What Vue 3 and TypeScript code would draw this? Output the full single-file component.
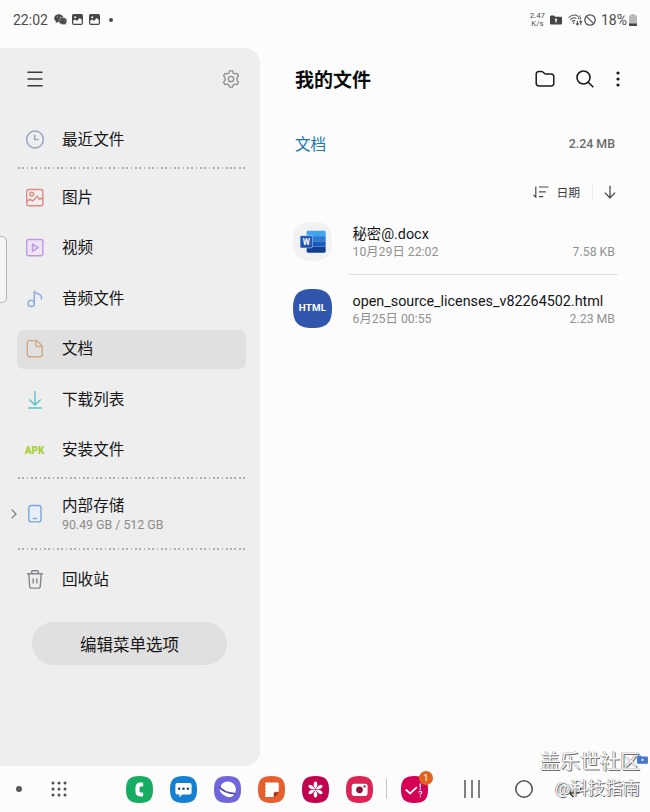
<template>
  <div class="screen">
    <header class="status">
      <div class="status-left">
        <span class="clock">22:02</span>
        <svg class="ic-wechat" viewBox="0 0 13 11" width="13" height="11">
          <ellipse cx="4.8" cy="4.2" rx="4.6" ry="3.9" fill="#484848" />
          <path d="M1.6 9l.6-2.4 2 1.3z" fill="#484848" />
          <ellipse cx="8.9" cy="7" rx="4" ry="3.4" fill="#484848" stroke="#fcfcfc" stroke-width=".4" />
          <path d="M11.6 10.8l-1.6-1.2 1.6-1z" fill="#484848" />
          <circle cx="3.3" cy="3" r=".5" fill="#fcfcfc" />
          <circle cx="6.2" cy="3" r=".5" fill="#fcfcfc" />
          <circle cx="7.7" cy="6.3" r=".4" fill="#fcfcfc" />
          <circle cx="10.2" cy="6.3" r=".4" fill="#fcfcfc" />
        </svg>
        <svg v-for="n in 2" :key="n" class="ic-shot" viewBox="0 0 11 11" width="11" height="11">
          <rect x=".6" y=".6" width="9.8" height="9.8" rx="1.3" fill="none" stroke="#484848" stroke-width="1.2" />
          <path d="M.6.6h9.8v5.6L7.6 4 5 7 3.2 5.5.6 7z" fill="#484848" />
          <circle cx="3.2" cy="3.2" r="1" fill="#fcfcfc" />
        </svg>
        <span class="more-dot"></span>
      </div>
      <div class="status-right">
        <span class="speed"><span>2.47</span><span>K/s</span></span>
        <svg class="ic-secure" viewBox="0 0 12 10" width="12" height="10">
          <path d="M0 1.5Q0 .5 1 .5h3l1.2 1.3H11q1 0 1 1v5.7q0 1-1 1H1q-1 0-1-1z" fill="#454545" />
          <path d="M6 3.4a1.2 1.2 0 0 1 .6 2.2v1.8H5.4V5.6A1.2 1.2 0 0 1 6 3.4z" fill="#fcfcfc" />
        </svg>
        <svg class="ic-wifi" viewBox="0 0 15 12" width="15" height="12" fill="none" stroke="#505050" stroke-width="1.1">
          <path d="M.6 3.6Q5.6-.8 10 2.4M2.2 5.6Q5.6 2.6 8.4 4.6M3.8 7.5Q5.7 6 7.2 7" />
          <path d="M5.6 8.4v1.5" stroke-width="1.4" />
          <path d="M12.4 1.6q-2 .6-2 2.4a1.2 1.2 0 1 0 1.2-1.2" stroke-width=".9" />
          <path d="M9.4 7v4M8.2 9.6l1.2 1.4 1.2-1.4M12.8 11V7M11.6 8.2l1.2-1.3L14 8.2" />
        </svg>
        <svg class="ic-block" viewBox="0 0 12 12" width="12" height="12" fill="none" stroke="#505050" stroke-width="1.3">
          <circle cx="6" cy="6" r="5.2" />
          <path d="M2.4 2.4l7.2 7.2" />
        </svg>
        <span class="percent">18%</span>
        <svg class="ic-battery" viewBox="0 0 8 12" width="8" height="12">
          <path d="M2.4 0h3.2v1.2H7q1 0 1 1V11q0 1-1 1H1q-1 0-1-1V2.2q0-1 1-1h1.4z" fill="#b9b9b9" />
          <path d="M0 9.6h8V11q0 1-1 1H1q-1 0-1-1z" fill="#454545" />
        </svg>
      </div>
    </header>

    <div class="body">
      <aside class="sidebar">
        <div class="edge-handle"></div>
        <div class="side-head">
          <svg viewBox="0 0 16 16" width="16" height="16" stroke="#3b3b3b" stroke-width="1.5" stroke-linecap="round">
            <path d="M1 1.3h14M1 8h14M1 14.7h14" />
          </svg>
          <svg viewBox="0 0 18 18" width="18" height="18" fill="none" stroke="#8d8d8d" stroke-width="1.3" stroke-linejoin="round">
            <path d="M7.5.9h3l.6 2.1 1.6.9 2.2-.6 1.6 2.6-1.5 1.7v2.8l1.5 1.7-1.6 2.6-2.2-.6-1.6.9-.6 2.1h-3L6.9 15l-1.6-.9-2.2.6-1.6-2.6L3 10.400V7.600L1.500 5.900l1.600-2.600 2.200.6L6.900 3z" />
            <circle cx="9" cy="9" r="2.7" />
          </svg>
        </div>

        <div class="group group--recent">
          <div class="item">
            <svg class="item-icon" viewBox="0 0 20 20" fill="none" stroke="#9aa6bf" stroke-width="1.5">
              <circle cx="10" cy="9.5" r="8.4" />
              <path d="M9.7 4.7v4.9h3.8" />
            </svg>
            <span class="item-label">最近文件</span>
          </div>
        </div>
        <div class="dots"></div>

        <nav class="group group--types">
          <div v-for="t in types" :key="t.id" class="item" :class="{ 'item--active': t.id === 'doc' }">
            <svg v-if="t.id === 'image'" class="item-icon" viewBox="0 0 20 20" fill="none" stroke="#e08c84" stroke-width="1.4" stroke-linejoin="round">
              <rect x="1.7" y="1.5" width="16.2" height="16.2" rx="2.2" />
              <circle cx="6.7" cy="6.1" r="1.9" />
              <path d="M1.8 13.8l3.2-2.7 2.6 2 4.7-4.8 2.2 3 1.5-1.2 1.9 1.9" />
            </svg>
            <svg v-else-if="t.id === 'video'" class="item-icon" viewBox="0 0 20 20" fill="#eee4f8" stroke="#bd98e0" stroke-width="1.4" stroke-linejoin="round">
              <rect x="1.7" y="1.5" width="16.2" height="16.2" rx="1.8" />
              <path d="M7.5 6v7.2l5.6-3.6z" />
            </svg>
            <svg v-else-if="t.id === 'audio'" class="item-icon" viewBox="0 0 20 20" fill="none" stroke="#8caede" stroke-width="1.5" stroke-linecap="round">
              <circle cx="6.2" cy="14.4" r="3.1" />
              <path d="M9.3 14.4V1.900c.5 2.700 2.200 2.200 4.100 3 2.500 1 3.500 3 2.900 5.200" />
            </svg>
            <svg v-else-if="t.id === 'doc'" class="item-icon" viewBox="0 0 20 20" fill="none" stroke="#cda982" stroke-width="1.4" stroke-linejoin="round">
              <path d="M4.6 1.6h7.100l5.500 5.500v8.300q0 2.300-2.300 2.300H4.600q-2.300 0-2.300-2.300V3.900q0-2.300 2.300-2.300z" />
              <path d="M10.800 1.900v3.900q0 1.800 1.800 1.800h4.300" />
            </svg>
            <svg v-else-if="t.id === 'download'" class="item-icon" viewBox="0 0 20 20" fill="none" stroke="#5cc3cb" stroke-width="1.4">
              <path d="M10 1v14M4.3 9.500l5.700 5.600 5.700-5.600M3.200 18h13.600" />
            </svg>
            <span v-else class="item-icon item-apk">APK</span>
            <span class="item-label">{{ t.label }}</span>
          </div>
        </nav>
        <div class="dots"></div>

        <div class="storage">
          <svg class="chevron" viewBox="0 0 6 10" width="6" height="10" fill="none" stroke="#777" stroke-width="1.2">
            <path d="M.7.6L5 5 .7 9.4" />
          </svg>
          <svg class="item-icon" viewBox="0 0 20 20" fill="#e9eff6" stroke="#7ba6d6" stroke-width="1.4">
            <rect x="3.8" y="1.5" width="12.2" height="16.4" rx="2.4" />
            <path d="M7.8 14.5h4.2" />
          </svg>
          <div class="storage-text">
            <span class="item-label">内部存储</span>
            <span class="storage-size">90.49 GB / 512 GB</span>
          </div>
        </div>
        <div class="dots"></div>

        <div class="group group--trash">
          <div class="item">
            <svg class="item-icon" viewBox="0 0 20 20" fill="none" stroke="#85858c" stroke-width="1.4" stroke-linejoin="round">
              <path d="M2 3.800h16M6.700 3.600V1.700q0-1 1-1h4.600q1 0 1 1v1.900M3.800 4l.9 12.200q.1 1.900 2 1.900h6.600q1.900 0 2-1.900L16.200 4M8.200 8.400v5M11.800 8.400v5" />
            </svg>
            <span class="item-label">回收站</span>
          </div>
        </div>
        <button class="edit-btn" type="button">编辑菜单选项</button>
      </aside>

      <main class="content">
        <div class="content-head">
          <h1 class="title">我的文件</h1>
          <div class="actions">
            <svg viewBox="0 0 20 18" width="20" height="18" fill="none" stroke="#1a1a1a" stroke-width="1.5" stroke-linejoin="round">
              <path d="M1.200 4.200q0-2.700 2.700-2.700h2.400q1.100 0 1.900.8l1 1q.8.800 1.900.8h4.900q2.800 0 2.800 2.800v6.300q0 2.700-2.700 2.700H3.900q-2.700 0-2.700-2.700z" />
            </svg>
            <svg viewBox="0 0 18 18" width="18" height="18" fill="none" stroke="#1a1a1a" stroke-width="1.6">
              <circle cx="7.5" cy="7.5" r="6.5" />
              <path d="M12 12l5.300 5.300" />
            </svg>
            <svg class="ic-more" viewBox="0 0 4 16" width="4" height="16" fill="#1a1a1a">
              <circle cx="2" cy="2" r="1.6" />
              <circle cx="2" cy="8" r="1.6" />
              <circle cx="2" cy="14" r="1.6" />
            </svg>
          </div>
        </div>

        <div class="crumb">
          <span class="crumb-name">文档</span>
          <span class="crumb-size">2.24 MB</span>
        </div>

        <div class="sort">
          <svg viewBox="0 0 16 12" width="16" height="12" fill="none" stroke="#4a4a4a" stroke-width="1.2">
            <path d="M2.800.5v10.600L.6 9M6 1h9.500M6 5.800h6.800M6 10.600h4.300" />
          </svg>
          <span class="sort-label">日期</span>
          <span class="sort-sep"></span>
          <svg viewBox="0 0 12 14" width="12" height="14" fill="none" stroke="#3c3c3c" stroke-width="1.2">
            <path d="M6 .8v12M.9 7.700L6 12.800l5.100-5.100" />
          </svg>
        </div>

        <ul class="files">
          <li v-for="f in files" :key="f.name" class="file">
            <svg v-if="f.kind === 'word'" class="file-icon" viewBox="0 0 40 40">
              <path :d="squircle" fill="#f2f2f3" />
              <path d="M15.500 9h16.500q1.500 0 1.500 1.500V14.500H14v-4Q14 9 15.500 9z" fill="#41a5ee" />
              <path d="M14 14.500h19.500v5.300H14z" fill="#2b7cd3" />
              <path d="M14 19.800h19.500v5.200H14z" fill="#185abd" />
              <path d="M14 25h19.500v5q0 1.500-1.500 1.500H15.500q-1.500 0-1.500-1.500z" fill="#103f91" />
              <rect x="7.300" y="14" width="12.600" height="12.600" rx="1.200" fill="#1d56b0" stroke="#dbe7f5" stroke-width=".5" />
              <text x="13.600" y="23.300" class="word-w" text-anchor="middle">W</text>
            </svg>
            <svg v-else class="file-icon" viewBox="0 0 40 40">
              <path :d="squircle" fill="#3056ad" />
              <text x="20" y="23" class="html-t" text-anchor="middle" textLength="28">HTML</text>
            </svg>
            <div class="file-main">
              <span class="file-name">{{ f.name }}</span>
              <div class="file-meta">
                <span>{{ f.date }}</span>
                <span>{{ f.size }}</span>
              </div>
            </div>
          </li>
        </ul>
      </main>
    </div>

    <footer class="taskbar">
      <span class="task-dot"></span>
      <svg class="grid-icon" viewBox="0 0 16 16" width="16" height="16" fill="#4d4d4d">
        <template v-for="r in 3" :key="r">
          <circle v-for="c in 3" :key="c" :cx="c * 6 - 4" :cy="r * 6 - 4" r="1.5" />
        </template>
      </svg>
      <div class="apps">
        <svg v-for="a in apps" :key="a.id" class="app" viewBox="0 0 40 40">
          <path :d="squircle" :fill="a.color" />
          <path v-if="a.id === 'phone'" d="M22 9.500h2q1.500 0 1.500 1.500v3.200q0 1.500-1.500 1.500h-2.200q-1.800 0-1.800 1.800v5q0 1.800 1.800 1.800H24q1.500 0 1.500 1.500V29q0 1.500-1.500 1.500h-2q-8 0-8-8v-5q0-8 8-8z" fill="#fff" />
          <g v-else-if="a.id === 'message'">
            <path d="M11 10.500h18q3 0 3 3v11q0 3-3 3H18l-4 4.500v-4.500h-3q-3 0-3-3v-11q0-3 3-3z" fill="#fff" />
            <circle v-for="x in [13.5, 20, 26.5]" :key="x" :cx="x" cy="19" r="1.9" fill="#1a4a80" />
          </g>
          <g v-else-if="a.id === 'browser'">
            <circle cx="20.5" cy="20" r="12" fill="#fff" />
            <path d="M6 17.500Q10 29.500 24.500 32.500Q8 36 6 17.500z" fill="#7066dc" />
            <path d="M7.500 15Q12 24.500 32.500 26.500" fill="none" stroke="#544ba8" stroke-width="2.6" />
          </g>
          <g v-else-if="a.id === 'notes'">
            <path d="M12 9.500h17q1.700 0 1.700 1.700v12H26q-3 0-3 3V31H12q-1.500 0-1.500-1.500V11q0-1.500 1.500-1.500z" fill="#fff" />
            <path d="M30.700 24.500H26q-1.800 0-1.800 1.800V31z" fill="#8e3311" />
            <path d="M10.300 12v18" stroke="#e65f2e" stroke-width="2.2" stroke-dasharray="2 2.6" />
          </g>
          <g v-else-if="a.id === 'gallery'" fill="#fff">
            <ellipse v-for="n in 6" :key="n" cx="20" cy="12.5" rx="2.7" ry="4.3" :transform="`rotate(${n * 60} 20 20)`" />
            <path v-for="n in 3" :key="`s${n}`" d="M20 12v16" stroke="#fff" stroke-width="2.2" :transform="`rotate(${n * 60} 20 20)`" />
            <circle cx="20" cy="20" r="1.6" fill="#c2014f" />
          </g>
          <g v-else-if="a.id === 'camera'">
            <rect x="8.5" y="11.5" width="23.5" height="18" rx="3.5" fill="#fff" />
            <circle cx="20" cy="20.5" r="5" fill="#8d1236" />
            <circle cx="27.5" cy="15.5" r="1.7" fill="#8d1236" />
          </g>
        </svg>
      </div>
      <span class="app-sep"></span>
      <div class="tips">
        <svg class="app" viewBox="0 0 40 40">
          <path :d="squircle" fill="#d40055" />
          <path d="M7 20l6.500 6 10-9.500" fill="none" stroke="#fff" stroke-width="2.8" />
          <path d="M28.500 11v6M28.500 18.300v2" fill="none" stroke="#fff" stroke-width="1.8" />
          <path d="M26.300 24.600q.2-2 2.300-2 2.200 0 2.200 1.900 0 1.200-2.200 2.400v1.600M28.600 29.800v1.800" fill="none" stroke="#fff" stroke-width="1.5" />
        </svg>
        <span class="badge">1</span>
      </div>
      <div class="keys">
        <svg viewBox="0 0 16 18" width="16" height="18" stroke="#555" stroke-width="1.5">
          <path d="M1 0v18M8 0v18M15 0v18" />
        </svg>
        <svg viewBox="0 0 18 18" width="18" height="18" fill="none" stroke="#555" stroke-width="1.6">
          <circle cx="9" cy="9" r="8.2" />
        </svg>
        <svg class="key-back" viewBox="0 0 14 10" width="14" height="10" fill="none" stroke="#333" stroke-width="1.5">
          <path d="M13 0q0 5-4 5H1.500M5.500 1l-4 4 4 4" />
        </svg>
      </div>
    </footer>

    <div class="watermark">
      <span class="wm-site">盖乐世社区</span>
      <span class="wm-user">@科技指南</span>
    </div>
    <svg class="float-folder" viewBox="0 0 12 10" width="11" height="9">
      <path d="M0 1.500Q0 .5 1 .5h3l1 1.300h6q1 0 1 1v6q0 1-1 1H1q-1 0-1-1z" fill="#4377cf" />
      <circle cx="6" cy="5.5" r="1.2" fill="#fff" />
    </svg>
  </div>
</template>

<script setup lang="ts">
interface FileType {
  id: string
  label: string
}

interface FileRow {
  kind: 'word' | 'html'
  name: string
  date: string
  size: string
}

// rounded app-icon shape on a 40 x 40 box
const squircle = 'M20 0C34.5 0 40 5.5 40 20S34.5 40 20 40 0 34.5 0 20 5.5 0 20 0z'

const types: FileType[] = [
  { id: 'image', label: '图片' },
  { id: 'video', label: '视频' },
  { id: 'audio', label: '音频文件' },
  { id: 'doc', label: '文档' },
  { id: 'download', label: '下载列表' },
  { id: 'apk', label: '安装文件' },
]

const files: FileRow[] = [
  { kind: 'word', name: '秘密@.docx', date: '10月29日 22:02', size: '7.58 KB' },
  { kind: 'html', name: 'open_source_licenses_v82264502.html', date: '6月25日 00:55', size: '2.23 MB' },
]

const apps = [
  { id: 'phone', color: '#16ad62' },
  { id: 'message', color: '#1480d2' },
  { id: 'browser', color: '#7066dc' },
  { id: 'notes', color: '#e65f2e' },
  { id: 'gallery', color: '#c2014f' },
  { id: 'camera', color: '#dd2555' },
]
</script>

<style>
body {
  background: #fcfcfc;
}
</style>

<style scoped>
.screen {
  position: relative;
  display: flex;
  flex-direction: column;
  width: 650px;
  height: 812px;
  overflow: hidden;
  background: #fcfcfc;
  color: #161616;
  font-family: Roboto, 'Noto Sans CJK SC', sans-serif;
}
svg {
  display: block;
  flex: none;
}

.status {
  display: flex;
  justify-content: space-between;
  height: 48px;
  padding: 0 12px 9px 13px;
  box-sizing: border-box;
  color: #4c4c4c;
}
.status-left,
.status-right {
  display: flex;
  align-items: center;
}
.clock {
  width: 35px;
  font-size: 14px;
  margin-right: 6px;
}
.ic-shot {
  margin-left: 6px;
}
.ic-wechat + .ic-shot {
  margin-left: 5px;
}
.more-dot {
  width: 4px;
  height: 4px;
  margin-left: 9px;
  border-radius: 50%;
  background: #484848;
}
.speed {
  display: flex;
  flex-direction: column;
  align-items: center;
  font-size: 7.8px;
  line-height: 8px;
}
.ic-secure {
  margin-left: 5px;
}
.ic-wifi {
  margin-left: 6px;
}
.ic-block {
  margin-left: 1px;
}
.percent {
  margin-left: 5px;
  font-size: 14px;
}
.ic-battery {
  margin-left: 2px;
  margin-right: 1px;
}

.body {
  display: flex;
  height: 718px;
}

.sidebar {
  position: relative;
  display: flex;
  flex-direction: column;
  width: 260px;
  box-sizing: border-box;
  background: #eeeeee;
  border-radius: 0 15px 15px 0;
}
.edge-handle {
  position: absolute;
  left: -7px;
  top: 188px;
  width: 12px;
  height: 65px;
  border: 1px solid #b4b4b4;
  border-radius: 5px;
  background: #f4f4f4;
}
.side-head {
  display: flex;
  align-items: center;
  justify-content: space-between;
  height: 62px;
  padding: 0 20px 0 27px;
}
.group {
  display: flex;
  flex-direction: column;
  padding: 0 14px 0 17px;
}
.group--recent {
  padding-top: 10px;
  height: 47px;
}
.group--types {
  gap: 11.5px;
  height: 299px;
  padding-top: 9px;
}
.group--trash {
  height: 63px;
  padding-top: 10px;
  box-sizing: border-box;
}
.item {
  display: flex;
  align-items: center;
  height: 39px;
  flex: none;
  padding-left: 7.5px;
  border-radius: 7px;
}
.item--active {
  background: #e0e0e0;
}
.item-icon {
  width: 20px;
  height: 20px;
  flex: none;
}
.item-label {
  margin-left: 17.5px;
  font-size: 15.6px;
  line-height: 20px;
}
.item-apk {
  display: flex;
  align-items: center;
  justify-content: center;
  font-size: 10px;
  font-weight: 900;
  color: #a9d03c;
}
.dots {
  height: 2px;
  flex: none;
  margin: 0 14px 0 18px;
  background: repeating-linear-gradient(90deg, #b0b0b0 0 1.8px, transparent 1.8px 4.33px);
}
.storage {
  display: flex;
  align-items: center;
  height: 69px;
  padding-left: 11px;
}
.chevron {
  margin-right: 7.5px;
}
.storage-text {
  display: flex;
  flex-direction: column;
  padding-top: 3px;
}
.storage-size {
  margin-left: 17.5px;
  font-size: 12.35px;
  line-height: 18px;
  color: #8b8b8b;
}
.edit-btn {
  width: 195px;
  height: 43px;
  margin: 9px 0 0 32px;
  padding: 0;
  border: 0;
  border-radius: 22px;
  background: #e0e0e0;
  color: #161616;
  font-family: inherit;
  font-size: 16.5px;
}

.content {
  flex: 1;
  padding: 0 32px 0 33px;
}
.content-head {
  display: flex;
  align-items: center;
  justify-content: space-between;
  height: 62px;
  padding-left: 2px;
  margin-right: -2px;
}
.title {
  margin: 0;
  padding-bottom: 2px;
  font-size: 19px;
  font-weight: 700;
  color: #0c0c0c;
}
.actions {
  display: flex;
  align-items: center;
  gap: 20.5px;
}
.ic-more {
  margin-left: 2px;
}
.crumb {
  display: flex;
  align-items: center;
  justify-content: space-between;
  height: 67px;
  padding: 0 3px 0 2px;
}
.crumb-name {
  margin-top: -2px;
  font-size: 15.6px;
  color: #1977b0;
}
.crumb-size {
  font-size: 12.4px;
  font-weight: 500;
  color: #6b6b6b;
}
.sort {
  display: flex;
  align-items: center;
  justify-content: flex-end;
  height: 30px;
  padding-right: 2px;
}
.sort-label {
  margin-left: 7px;
  margin-top: -2px;
  font-size: 11.8px;
  color: #3c3c3c;
}
.sort-sep {
  width: 1px;
  height: 15px;
  margin: 0 11.5px;
  background: #ececec;
}
.files {
  margin: 0;
  padding: 1px 0 0;
  list-style: none;
}
.file {
  display: flex;
  align-items: center;
  height: 67px;
}
.file-icon {
  width: 39px;
  height: 39px;
}
.file-main {
  display: flex;
  flex-direction: column;
  justify-content: center;
  flex: 1;
  height: 100%;
  margin-left: 17px;
  padding: 3px 3px 0 3.5px;
  box-sizing: border-box;
}
.file + .file .file-main {
  box-shadow: 0 -1px 0 #e2e2e2;
}
.file-name {
  font-size: 14.35px;
  line-height: 18px;
  white-space: nowrap;
}
.file-meta {
  display: flex;
  justify-content: space-between;
  font-size: 12.3px;
  line-height: 17px;
  color: #919191;
}
.word-w {
  font-size: 8.5px;
  font-weight: 700;
  fill: #fff;
}
.html-t {
  font-size: 10px;
  font-weight: 700;
  fill: #fff;
}

.taskbar {
  display: flex;
  align-items: center;
  height: 46px;
  padding-left: 16px;
}
.task-dot {
  width: 6px;
  height: 6px;
  border-radius: 50%;
  background: #5a5a5a;
}
.grid-icon {
  margin-left: 28.5px;
}
.apps {
  display: flex;
  gap: 17.1px;
  margin-left: 59px;
}
.app {
  width: 27px;
  height: 27px;
}
.app-sep {
  width: 1px;
  height: 20px;
  margin: 0 13.5px;
  background: #c4c4c4;
}
.tips {
  position: relative;
}
.badge {
  position: absolute;
  top: -5px;
  right: -5px;
  width: 14px;
  height: 14px;
  border-radius: 50%;
  background: #e2641c;
  color: #fff;
  font-size: 9.5px;
  line-height: 14px;
  text-align: center;
}
.keys {
  display: flex;
  align-items: center;
  margin-left: 36px;
  gap: 35px;
}
.key-back {
  margin-top: 8px;
}

.watermark {
  position: absolute;
  right: 10px;
  top: 749px;
  display: flex;
  flex-direction: column;
  align-items: flex-end;
  color: #f4f4f4;
  text-shadow: 1px 1px 0 #6e6e6e, -0.5px -0.5px 0 #7c7c7c;
}
.wm-site {
  font-size: 20px;
  line-height: 26px;
}
.wm-user {
  font-size: 17.4px;
  line-height: 26px;
}
.float-folder {
  position: absolute;
  left: 637px;
  top: 755px;
}
</style>
